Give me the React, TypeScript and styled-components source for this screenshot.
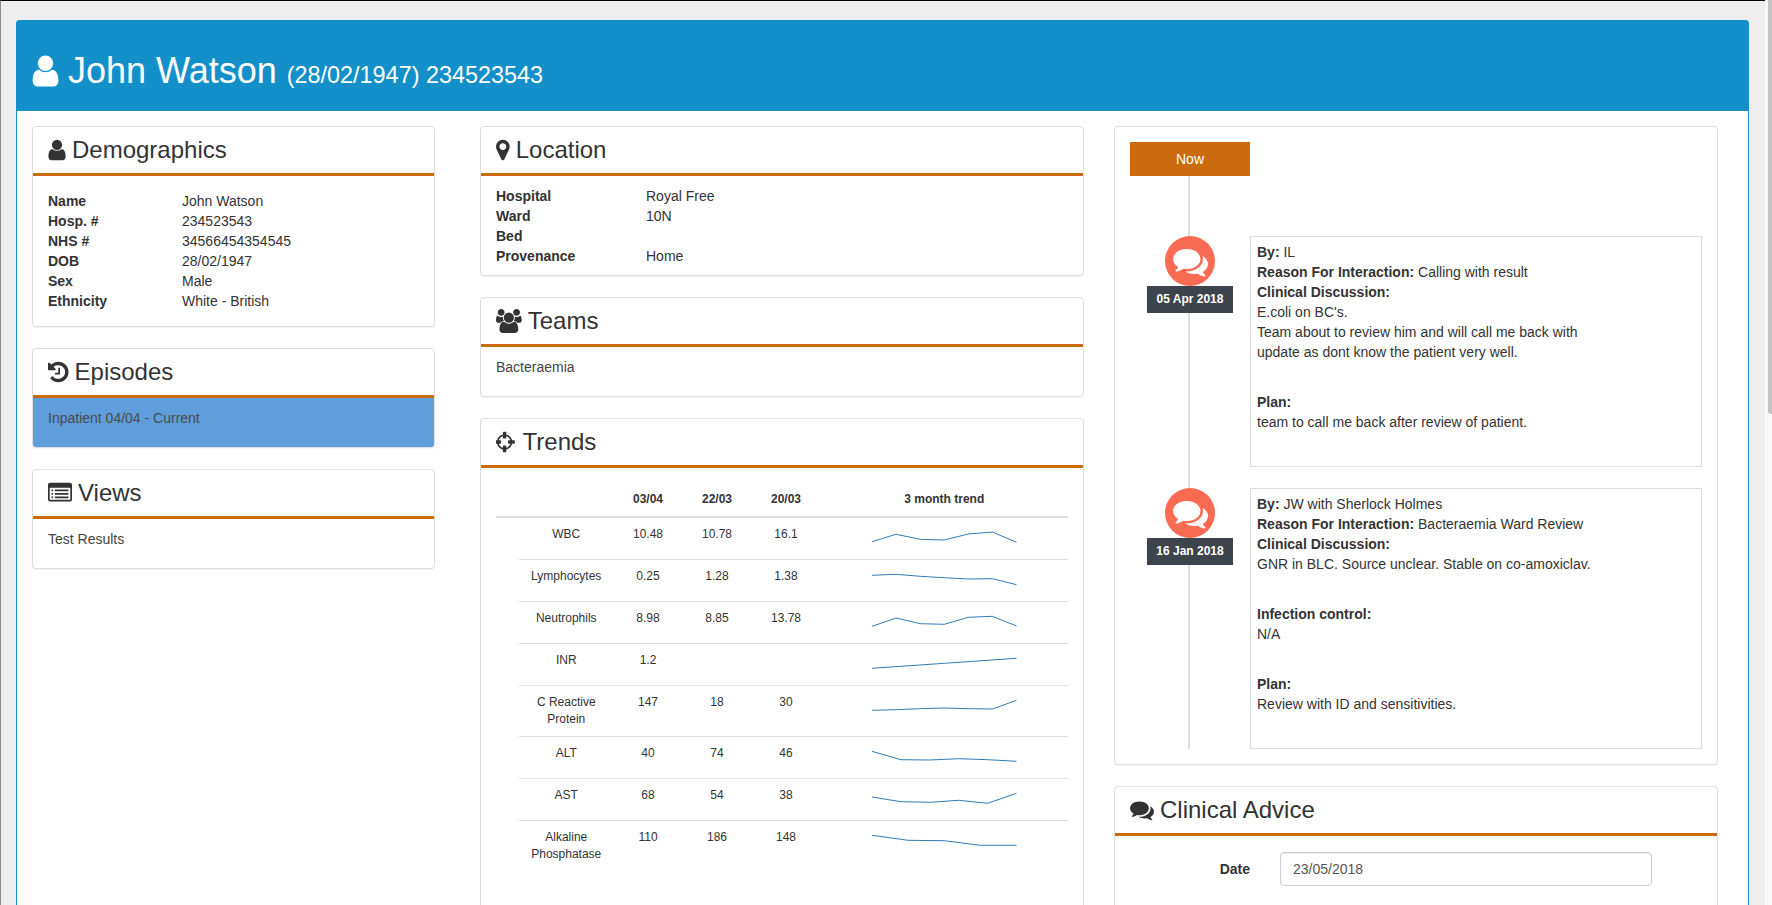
import React from "react";
import styled, { createGlobalStyle } from "styled-components";

const GlobalStyle = createGlobalStyle`
  html, body {
    margin: 0;
    height: 905px;
    overflow: hidden;
    background: #eeeeee;
  }
  body {
    font-family: "Liberation Sans", Arial, sans-serif;
    font-size: 14px;
    line-height: 20px;
    color: #333;
  }
  * {
    box-sizing: border-box;
  }
`;

// font-awesome 4 glyphs, each viewBox is the advance box of the glyph
const GLYPHS = {
  user: {
    box: "224 0 1344 1792",
    advance: 1344,
    d: "M1536 1399q0 109-62.5 187t-150.5 78h-854q-88 0-150.5-78t-62.5-187q0-85 8.5-160.5t31.5-152 58.5-131 94-89 134.5-34.5q131 128 313 128t313-128q76 0 134.5 34.5t94 89 58.5 131 31.5 152 8.5 160.5zm-256-887q0 159-112.5 271.5t-271.5 112.5-271.5-112.5-112.5-271.5 112.5-271.5 271.5-112.5 271.5 112.5 112.5 271.5z",
  },
  marker: {
    box: "384 0 1024 1792",
    advance: 1024,
    d: "M1152 640q0-106-75-181t-181-75-181 75-75 181 75 181 181 75 181-75 75-181zm256 0q0 109-33 179l-364 774q-16 33-47.5 52t-67.5 19-67.5-19-46.5-52l-365-774q-33-70-33-179 0-212 150-362t362-150 362 150 150 362z",
  },
  group: {
    box: "0 0 1920 1792",
    advance: 1920,
    d: "M593 896q-162 5-265 128h-134q-82 0-138-40.5t-56-118.5q0-353 124-353 6 0 43.5 21t97.5 42.5 119 21.5q67 0 133-23-5 37-5 66 0 139 81 256zm1071 637q0 120-73 189.5t-194 69.5h-874q-121 0-194-69.5t-73-189.5q0-53 3.5-103.5t14-109 26.5-108.5 43-97.5 62-81 85.5-53.5 111.5-20q10 0 43 21.5t73 48 107 48 135 21.5 135-21.5 107-48 73-48 43-21.5q61 0 111.5 20t85.5 53.5 62 81 43 97.5 26.5 108.5 14 109 3.5 103.5zm-1024-1277q0 106-75 181t-181 75-181-75-75-181 75-181 181-75 181 75 75 181zm704 384q0 159-112.5 271.5t-271.5 112.5-271.5-112.5-112.5-271.5 112.5-271.5 271.5-112.5 271.5 112.5 112.5 271.5zm576 225q0 78-56 118.5t-138 40.5h-134q-103-123-265-128 81-117 81-256 0-29-5-66 66 23 133 23 59 0 119-21.5t97.5-42.5 43.5-21q124 0 124 353zm-128-609q0 106-75 181t-181 75-181-75-75-181 75-181 181-75 181 75 75 181z",
  },
  history: {
    box: "128 0 1536 1792",
    advance: 1536,
    d: "M1664 896q0 156-61 298t-164 245-245 164-298 61q-172 0-327-72.5t-264-204.5q-7-10-6.5-22.5t8.5-20.5l137-138q10-9 25-9 16 2 23 12 73 95 179 147t225 52q104 0 198.5-40.5t163.5-109.5 109.5-163.5 40.5-198.5-40.5-198.5-109.5-163.5-163.5-109.5-198.5-40.5q-98 0-188 35.5t-160 101.5l137 138q31 30 14 69-17 40-59 40h-448q-26 0-45-19t-19-45v-448q0-42 40-59 39-17 69 14l130 129q107-101 244.5-156.5t284.5-55.5q156 0 298 61t245 164 164 245 61 298zm-640-288v448q0 14-9 23t-23 9h-320q-14 0-23-9t-9-23v-64q0-14 9-23t23-9h224v-352q0-14 9-23t23-9h64q14 0 23 9t9 23z",
  },
  listAlt: {
    box: "0 0 1792 1792",
    advance: 1792,
    d: "M384 1184v64q0 13-9.5 22.5t-22.5 9.5h-64q-13 0-22.5-9.5t-9.5-22.5v-64q0-13 9.5-22.5t22.5-9.5h64q13 0 22.5 9.5t9.5 22.5zm0-256v64q0 13-9.5 22.5t-22.5 9.5h-64q-13 0-22.5-9.5t-9.5-22.5v-64q0-13 9.5-22.5t22.5-9.5h64q13 0 22.5 9.5t9.5 22.5zm0-256v64q0 13-9.5 22.5t-22.5 9.5h-64q-13 0-22.5-9.5t-9.5-22.5v-64q0-13 9.5-22.5t22.5-9.5h64q13 0 22.5 9.5t9.5 22.5zm1152 512v64q0 13-9.5 22.5t-22.5 9.5h-960q-13 0-22.5-9.5t-9.5-22.5v-64q0-13 9.5-22.5t22.5-9.5h960q13 0 22.5 9.5t9.5 22.5zm0-256v64q0 13-9.5 22.5t-22.5 9.5h-960q-13 0-22.5-9.5t-9.5-22.5v-64q0-13 9.5-22.5t22.5-9.5h960q13 0 22.5 9.5t9.5 22.5zm0-256v64q0 13-9.5 22.5t-22.5 9.5h-960q-13 0-22.5-9.5t-9.5-22.5v-64q0-13 9.5-22.5t22.5-9.5h960q13 0 22.5 9.5t9.5 22.5zm128 704v-832q0-13-9.5-22.5t-22.5-9.5h-1472q-13 0-22.5 9.5t-9.5 22.5v832q0 13 9.5 22.5t22.5 9.5h1472q13 0 22.5-9.5t9.5-22.5zm128-1088v1088q0 66-47 113t-113 47h-1472q-66 0-113-47t-47-113v-1088q0-66 47-113t113-47h1472q66 0 113 47t47 113z",
  },
  crosshairs: {
    box: "128 0 1536 1792",
    advance: 1536,
    d: "M1197 1024h-109q-26 0-45-19t-19-45v-128q0-26 19-45t45-19h109q-32-108-112.5-188.5t-188.5-112.5v109q0 26-19 45t-45 19h-128q-26 0-45-19t-19-45v-109q-108 32-188.5 112.5t-112.5 188.5h109q26 0 45 19t19 45v128q0 26-19 45t-45 19h-109q32 108 112.5 188.5t188.5 112.5v-109q0-26 19-45t45-19h128q26 0 45 19t19 45v109q108-32 188.5-112.5t112.5-188.5zm339-192v128q0 26-19 45t-45 19h-143q-37 161-154.5 278.5t-278.5 154.5v143q0 26-19 45t-45 19h-128q-26 0-45-19t-19-45v-143q-161-37-278.5-154.5t-154.5-278.5h-143q-26 0-45-19t-19-45v-128q0-26 19-45t45-19h143q37-161 154.5-278.5t278.5-154.5v-143q0-26 19-45t45-19h128q26 0 45 19t19 45v143q161 37 278.5 154.5t154.5 278.5h143q26 0 45 19t19 45z",
  },
  comments: {
    box: "0 0 1792 1792",
    advance: 1792,
    d: "M1408 768q0 139-94 257t-256.5 186.5-353.5 68.5q-86 0-176-16-124 88-278 128-36 9-86 16h-3q-11 0-20.5-8t-11.5-21q-1-3-1-6.5t.5-6.5 2-6l2.5-5 3.5-5.5 4-5 4.5-5 4-4.5q5-6 23-25t26-29.5 22.5-29 25-38.5 20.5-44q-124-72-195-177t-71-224q0-139 94-257t256.5-186.5 353.5-68.5 353.5 68.5 256.5 186.5 94 257zm384 256q0 120-71 224.5t-195 176.5q10 24 20.5 44t25 38.5 22.5 29 26 29.5 23 25q1 1 4 4.5t4.5 5 4 5 3.5 5.5l2.5 5 2 6 .5 6.5-1 6.5q-3 14-13 22t-22 7q-50-7-86-16-154-40-278-128-90 16-176 16-271 0-472-132 58 4 88 4 161 0 309-45t264-129q125-92 192-212t67-254q0-77-23-152 129 71 204 178t75 230z",
  },
};

type GlyphName = keyof typeof GLYPHS;

function Glyph({ name, size = 24 }: { name: GlyphName; size?: number }) {
  const glyph = GLYPHS[name];
  return (
    <svg
      viewBox={glyph.box}
      width={(glyph.advance * size) / 1792}
      height={size}
      fill="currentColor"
      style={{ flex: "none" }}
    >
      <path d={glyph.d} />
    </svg>
  );
}

const TREND_W = 144.5;

function Spark({ points }: { points: number[] }) {
  const step = TREND_W / (points.length - 1);
  const line = points.map((y, i) => `${(i * step).toFixed(1)},${y}`).join(" ");
  return (
    <svg width={TREND_W} height={25} style={{ display: "block" }}>
      <polyline points={line} fill="none" stroke="#337ab7" strokeWidth="1" />
    </svg>
  );
}

const trends = [
  { name: "WBC", a: "10.48", b: "10.78", c: "16.1", spark: [15.7, 8.3, 13.3, 14, 8, 6, 16.3] },
  { name: "Lymphocytes", a: "0.25", b: "1.28", c: "1.38", spark: [7.3, 6.3, 8.3, 9.7, 11, 10.7, 16.7] },
  { name: "Neutrophils", a: "8.98", b: "8.85", c: "13.78", spark: [16.3, 8, 13.7, 14.3, 7.3, 6.3, 16] },
  { name: "INR", a: "1.2", b: "", c: "", spark: [16.3, 6.3] },
  { name: "C Reactive Protein", a: "147", b: "18", c: "30", spark: [16.3, 15.7, 14.7, 14, 14.7, 15, 6.3] },
  { name: "ALT", a: "40", b: "74", c: "46", spark: [6.3, 14.7, 15, 13.7, 14.7, 16.3] },
  { name: "AST", a: "68", b: "54", c: "38", spark: [10, 14.7, 15.3, 13.3, 16.3, 6.3] },
  { name: "Alkaline Phosphatase", a: "110", b: "186", c: "148", spark: [6.3, 11.3, 11.7, 16.3, 16.3] },
];

export default function App() {
  return (
    <Shell>
      <GlobalStyle />
      <Page>
        <Panel>
          <PanelHeader>
            <Glyph name="user" size={36} />
            <PatientName>
              John Watson <small>(28/02/1947) 234523543</small>
            </PatientName>
          </PanelHeader>
          <PanelBody>
            <Column $width={403} $after={45}>
              <Card>
                <CardTitle>
                  <Glyph name="user" />
                  Demographics
                </CardTitle>
                <CardBody $pad={15}>
                  <Facts $label={134}>
                    <dt>Name</dt>
                    <dd>John Watson</dd>
                    <dt>Hosp. #</dt>
                    <dd>234523543</dd>
                    <dt>NHS #</dt>
                    <dd>34566454354545</dd>
                    <dt>DOB</dt>
                    <dd>28/02/1947</dd>
                    <dt>Sex</dt>
                    <dd>Male</dd>
                    <dt>Ethnicity</dt>
                    <dd>White - British</dd>
                  </Facts>
                </CardBody>
              </Card>
              <Card>
                <CardTitle>
                  <Glyph name="history" />
                  Episodes
                </CardTitle>
                <ActiveItem>Inpatient 04/04 - Current</ActiveItem>
              </Card>
              <Card>
                <CardTitle>
                  <Glyph name="listAlt" />
                  Views
                </CardTitle>
                <ListItem>Test Results</ListItem>
              </Card>
            </Column>
            <Column $width={604} $after={30}>
              <Card>
                <CardTitle>
                  <Glyph name="marker" />
                  Location
                </CardTitle>
                <CardBody $pad={10}>
                  <Facts $label={150}>
                    <dt>Hospital</dt>
                    <dd>Royal Free</dd>
                    <dt>Ward</dt>
                    <dd>10N</dd>
                    <dt>Bed</dt>
                    <dd></dd>
                    <dt>Provenance</dt>
                    <dd>Home</dd>
                  </Facts>
                </CardBody>
              </Card>
              <Card>
                <CardTitle>
                  <Glyph name="group" />
                  Teams
                </CardTitle>
                <ListItem>Bacteraemia</ListItem>
              </Card>
              <Card>
                <CardTitle>
                  <Glyph name="crosshairs" />
                  Trends
                </CardTitle>
                <TrendBody>
                  <TrendHead>
                    <NameCell />
                    <ValueCell>03/04</ValueCell>
                    <ValueCell>22/03</ValueCell>
                    <ValueCell>20/03</ValueCell>
                    <SparkCell>3 month trend</SparkCell>
                  </TrendHead>
                  {trends.map((row) => (
                    <TrendRow key={row.name}>
                      <NameCell>{row.name}</NameCell>
                      <ValueCell>{row.a}</ValueCell>
                      <ValueCell>{row.b}</ValueCell>
                      <ValueCell>{row.c}</ValueCell>
                      <SparkCell>
                        <Spark points={row.spark} />
                      </SparkCell>
                    </TrendRow>
                  ))}
                </TrendBody>
              </Card>
            </Column>
            <Column $width={604} $after={0}>
              <Card>
                <Timeline>
                  <NowTag>Now</NowTag>
                  <Entry $gap={60}>
                    <Stamp date="05 Apr 2018" />
                    <EntryBox>
                      <p>
                        <b>By:</b> IL
                        <br />
                        <b>Reason For Interaction:</b> Calling with result
                        <br />
                        <b>Clinical Discussion:</b>
                        <br />
                        E.coli on BC's.
                        <br />
                        Team about to review him and will call me back with
                        <br />
                        update as dont know the patient very well.
                      </p>
                      <p>
                        <b>Plan:</b>
                        <br />
                        team to call me back after review of patient.
                      </p>
                    </EntryBox>
                  </Entry>
                  <Entry $gap={21}>
                    <Stamp date="16 Jan 2018" />
                    <EntryBox>
                      <p>
                        <b>By:</b> JW with Sherlock Holmes
                        <br />
                        <b>Reason For Interaction:</b> Bacteraemia Ward Review
                        <br />
                        <b>Clinical Discussion:</b>
                        <br />
                        GNR in BLC. Source unclear. Stable on co-amoxiclav.
                      </p>
                      <p>
                        <b>Infection control:</b>
                        <br />
                        N/A
                      </p>
                      <p>
                        <b>Plan:</b>
                        <br />
                        Review with ID and sensitivities.
                      </p>
                    </EntryBox>
                  </Entry>
                </Timeline>
              </Card>
              <Card>
                <CardTitle>
                  <Glyph name="comments" />
                  Clinical Advice
                </CardTitle>
                <FormRow>
                  <FormLabel>Date</FormLabel>
                  <DateInput defaultValue="23/05/2018" />
                </FormRow>
              </Card>
            </Column>
          </PanelBody>
        </Panel>
      </Page>
      <ScrollTrack>
        <ScrollThumb />
      </ScrollTrack>
    </Shell>
  );
}

function Stamp({ date }: { date: string }) {
  return (
    <StampColumn>
      <StampIcon>
        <Glyph name="comments" size={35} />
      </StampIcon>
      <StampDate>{date}</StampDate>
    </StampColumn>
  );
}

const Shell = styled.div`
  display: flex;
  height: 905px;
  overflow: hidden;
`;
const Page = styled.div`
  width: 1765px;
  flex: none;
  padding: 19px 16px 0 15px;
  border-top: 1px solid #000;
  border-left: 1px solid #8c8c8c;
`;
const ScrollTrack = styled.div`
  flex: 1;
  background: #f8f8f8;
  position: relative;
`;
const ScrollThumb = styled.div`
  position: absolute;
  top: 0;
  left: 3px;
  right: 0;
  height: 414px;
  background: #c2c2c2;
  border-bottom-left-radius: 3px;
`;
const Panel = styled.section`
  background: #fff;
  border: 1px solid #1390ca;
  border-radius: 4px 4px 0 0;
  min-height: 900px;
`;
const PanelHeader = styled.header`
  height: 91px;
  margin: -1px -1px 0;
  padding: 10px 16px 0;
  border-radius: 4px 4px 0 0;
  background: #1390ca;
  color: #fff;
  display: flex;
  align-items: center;
  gap: 9px;
`;
const PatientName = styled.h1`
  margin: 5px 0 0;
  font-size: 36px;
  font-weight: 400;
  line-height: 40px;
  small {
    font-size: 23.4px;
    font-weight: 400;
  }
`;
const PanelBody = styled.div`
  display: flex;
  align-items: flex-start;
  padding: 15px 15px 0;
`;
const Column = styled.div<{ $width: number; $after: number }>`
  width: ${(p) => p.$width}px;
  margin-right: ${(p) => p.$after}px;
  flex: none;
  display: flex;
  flex-direction: column;
  gap: 21px;
`;
const Card = styled.div`
  background: #fff;
  border: 1px solid #ddd;
  border-radius: 4px;
  box-shadow: 0 1px 1px rgba(0, 0, 0, 0.05);
  overflow: hidden;
`;
const CardTitle = styled.h3`
  margin: 0;
  height: 49px;
  padding: 0 15px;
  border-bottom: 3px solid #cc6a10;
  display: flex;
  align-items: center;
  gap: 6px;
  font-size: 24px;
  font-weight: 400;
  line-height: 26px;
  color: #333;
`;
const CardBody = styled.div<{ $pad: number }>`
  padding: ${(p) => p.$pad}px 15px;
  margin-bottom: ${(p) => (p.$pad === 10 ? -1 : 0)}px;
`;
const Facts = styled.dl<{ $label: number }>`
  margin: 0;
  display: grid;
  grid-template-columns: ${(p) => p.$label}px 1fr;
  grid-auto-rows: 20px;
  dt {
    font-weight: 700;
  }
  dd {
    margin: 0;
  }
`;
const ListItem = styled.div`
  padding: 10px 15px 19px;
  color: #444;
`;
const ActiveItem = styled(ListItem)`
  background: #609ddb;
  color: #4a4a4a;
`;
const TrendBody = styled.div`
  padding: 15px 15px 46px;
  font-size: 12px;
  line-height: 17px;
  text-align: center;
`;
const TrendHead = styled.div`
  display: flex;
  padding: 8px 0 8px 23px;
  border-bottom: 2px solid #ddd;
  font-weight: 700;
`;
const TrendRow = styled.div`
  display: flex;
  margin-left: 23px;
  padding: 8px 0;
  border-bottom: 1px solid #ddd;
  &:last-child {
    border-bottom: 0;
  }
`;
const NameCell = styled.div`
  width: 94.5px;
  flex: none;
`;
const ValueCell = styled.div`
  width: 69px;
  flex: none;
`;
const SparkCell = styled.div`
  flex: 1;
  display: flex;
  justify-content: center;
`;
const Timeline = styled.div`
  position: relative;
  margin: 15px;
  &::before {
    content: "";
    position: absolute;
    top: 0;
    bottom: 0;
    left: 58px;
    width: 2px;
    background: #ddd;
  }
`;
const NowTag = styled.div`
  position: relative;
  width: 120px;
  height: 34px;
  background: #cc6a10;
  color: #fff;
  text-align: center;
  line-height: 34px;
`;
const Entry = styled.div<{ $gap: number }>`
  position: relative;
  display: flex;
  align-items: flex-start;
  margin-top: ${(p) => p.$gap}px;
`;
const StampColumn = styled.div`
  width: 120px;
  flex: none;
  display: flex;
  flex-direction: column;
  align-items: center;
`;
const StampIcon = styled.div`
  width: 50px;
  height: 50px;
  border-radius: 50%;
  background: #fb6b53;
  color: #fff;
  display: flex;
  align-items: center;
  justify-content: center;
`;
const StampDate = styled.div`
  width: 86px;
  height: 27px;
  background: #3e444c;
  color: #fff;
  font-size: 12px;
  font-weight: 700;
  line-height: 27px;
  text-align: center;
`;
const EntryBox = styled.div`
  flex: 1;
  padding: 5px 5px 4px 6px;
  border: 1px solid #ddd;
  background: #fff;
  p {
    margin: 0 0 30px;
  }
`;
const FormRow = styled.div`
  display: flex;
  align-items: center;
  padding: 16px 0 60px;
`;
const FormLabel = styled.label`
  width: 135px;
  flex: none;
  margin-right: 30px;
  text-align: right;
  font-weight: 700;
`;
const DateInput = styled.input`
  width: 372px;
  height: 34px;
  padding: 6px 12px;
  border: 1px solid #ccc;
  border-radius: 4px;
  box-shadow: inset 0 1px 1px rgba(0, 0, 0, 0.075);
  font: inherit;
  color: #555;
`;
